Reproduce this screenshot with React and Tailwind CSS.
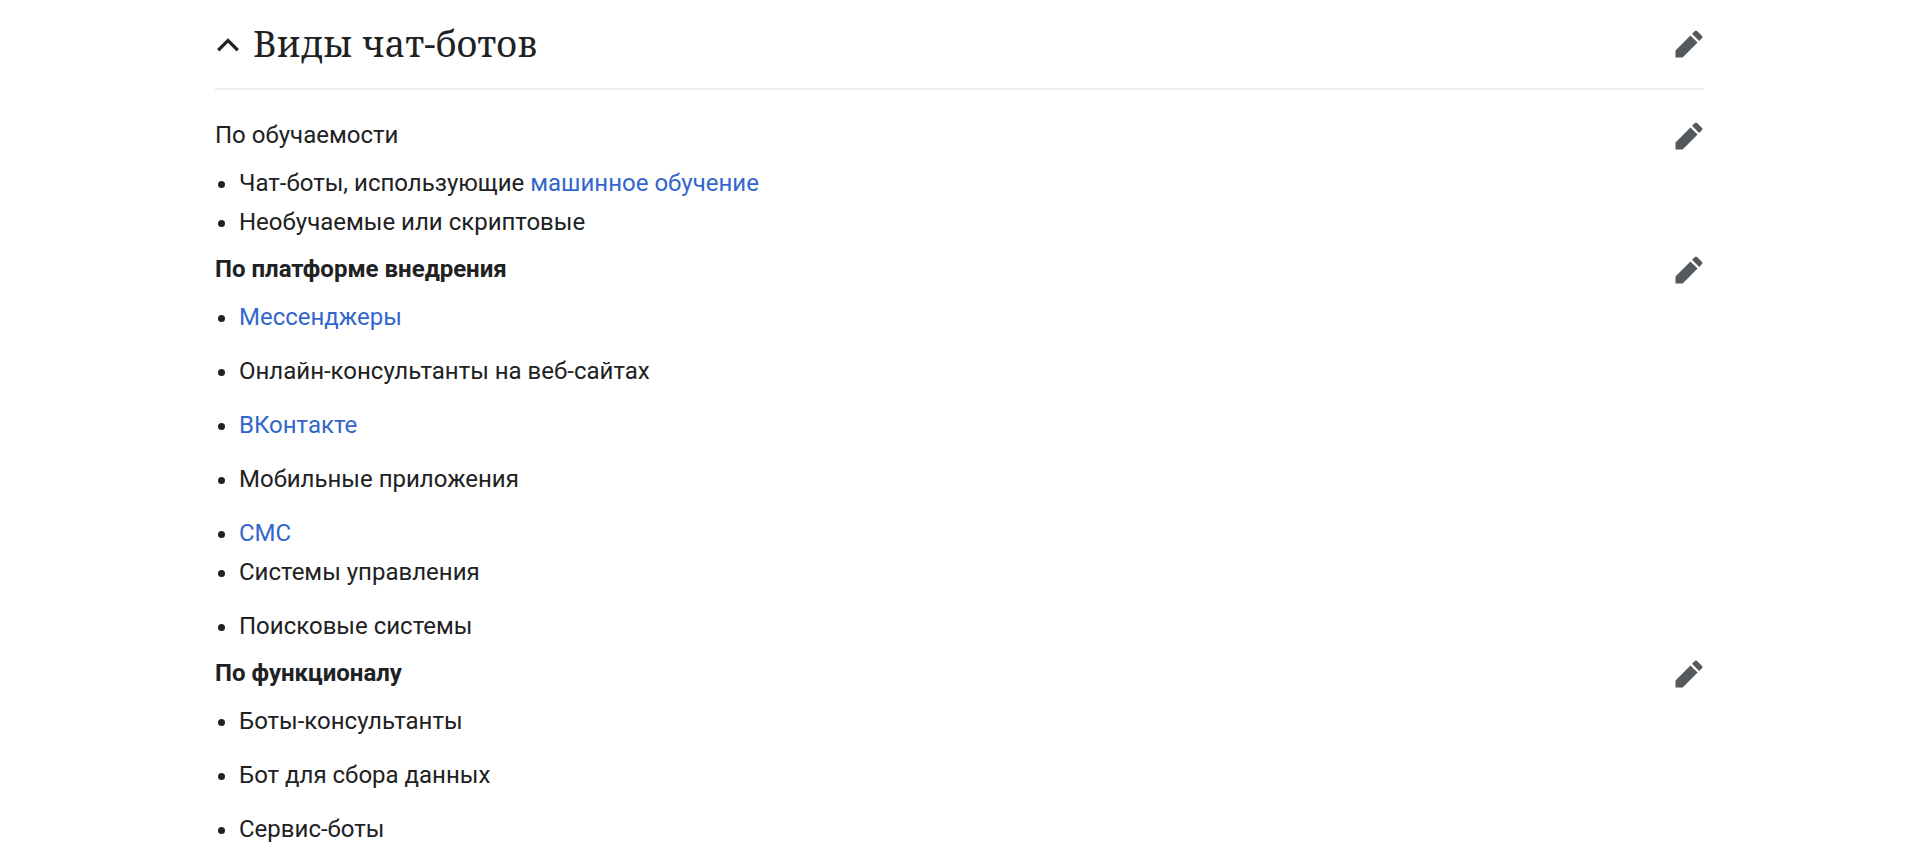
const Pencil = () => (
  <svg viewBox="0 0 20 20" className="w-[30px] h-[30px] shrink-0" fill="#54595d">
    <path d="M16.77 8l1.94-2a1 1 0 0 0 0-1.41l-3.34-3.3a1 1 0 0 0-1.41 0L12 3.23zm-5.81-3.71L1 14.25V19h4.75l9.96-9.96z" />
  </svg>
);

const A = ({ children }) => <a className="text-[#3366cc]">{children}</a>;

const Item = ({ children, loose }) => (
  <li className={`ml-6 ${loose ? "h-[54px]" : "h-[39px]"}`}>{children}</li>
);

const Sub = ({ children, bold }) => (
  <div className={`flex items-center justify-between h-[39px] text-[24px] ${bold ? "font-bold mt-2" : ""}`}>
    <span>{children}</span>
    <Pencil />
  </div>
);

export default function App() {
  return (
    <div className="w-[1918px] h-[862px] overflow-hidden bg-white text-[#202122] text-[24px] leading-[39px] font-['Roboto',sans-serif]">
      <div className="w-[1489px] ml-[215px]">
        <div className="flex items-center h-[90px] border-b-2 border-[#eaecf0] justify-between">
          <div className="flex items-center">
            <svg viewBox="0 0 20 20" className="w-[26px] h-[26px] mr-[12px] text-[#202122]" fill="currentColor">
              <path d="M10 5.5 1.6 13.9l1.8 1.8L10 9.1l6.6 6.6 1.8-1.8z" />
            </svg>
            <h2 className="text-[36px] font-['Noto_Serif','DejaVu_Serif',serif] leading-none">Виды чат-ботов</h2>
          </div>
          <Pencil />
        </div>
        <div className="pt-[26px]">
          <Sub>По обучаемости</Sub>
          <ul className="list-disc mt-[9px]">
            <Item>Чат-боты, использующие <A>машинное обучение</A></Item>
            <Item>Необучаемые или скриптовые</Item>
          </ul>
          <Sub bold>По платформе внедрения</Sub>
          <ul className="list-disc mt-[9px]">
            <Item loose><A>Мессенджеры</A></Item>
            <Item loose>Онлайн-консультанты на веб-сайтах</Item>
            <Item loose><A>ВКонтакте</A></Item>
            <Item loose>Мобильные приложения</Item>
            <Item><A>СМС</A></Item>
            <Item loose>Системы управления</Item>
            <Item>Поисковые системы</Item>
          </ul>
          <Sub bold>По функционалу</Sub>
          <ul className="list-disc mt-[9px]">
            <Item loose>Боты-консультанты</Item>
            <Item loose>Бот для сбора данных</Item>
            <Item>Сервис-боты</Item>
          </ul>
        </div>
      </div>
    </div>
  );
}
